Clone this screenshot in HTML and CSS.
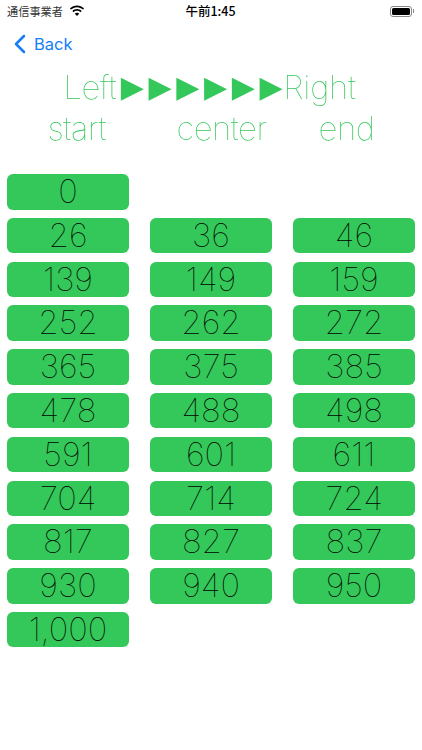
FILE: index.html
```html
<!DOCTYPE html>
<html lang="ja">
<head>
<meta charset="utf-8">
<title>Alignment</title>
<link rel="stylesheet" href="styles.css">
</head>
<body>
<div class="status">
  <div class="status-left">
    <span class="carrier">通信事業者</span>
    <svg class="wifi" viewBox="0 0 16 12" width="16" height="12"><path d="M8 2.2c2.3 0 4.4.9 6 2.4l1.1-1.2C13.200 1.600 10.700.5 8 .5S2.800 1.600.9 3.400L2 4.600c1.600-1.500 3.700-2.400 6-2.400zM8 5.800c1.300 0 2.500.5 3.400 1.400l1.200-1.200C11.400 4.800 9.800 4.100 8 4.100S4.600 4.800 3.400 6l1.200 1.200c.9-.9 2.100-1.400 3.400-1.400zM8 7.800c-.9 0-1.700.4-2.200.9L8 11l2.200-2.300c-.5-.5-1.300-.9-2.200-.9z"/></svg>
  </div>
  <span class="time">午前1:45</span>
  <div class="battery"><span class="battery-body"><span class="battery-fill"></span></span><span class="battery-cap"></span></div>
</div>
<nav class="nav">
  <svg class="chevron" viewBox="0 0 13 20" width="13" height="20"><path d="M11 2 L3 10 L11 18" fill="none" stroke="#147efb" stroke-width="2.500" stroke-linecap="round" stroke-linejoin="round"/></svg>
  <span class="back">Back</span>
</nav>
<h1 class="title"><span>Left</span><span class="arrows">▶▶▶▶▶▶</span><span class="right">Right</span></h1>
<div class="labels"><span>start</span><span>center</span><span>end</span></div>
<main class="grid">
  <div class="cell">0</div><div class="empty"></div><div class="empty"></div>
  <div class="cell">26</div><div class="cell">36</div><div class="cell">46</div>
  <div class="cell">139</div><div class="cell">149</div><div class="cell">159</div>
  <div class="cell">252</div><div class="cell">262</div><div class="cell">272</div>
  <div class="cell">365</div><div class="cell">375</div><div class="cell">385</div>
  <div class="cell">478</div><div class="cell">488</div><div class="cell">498</div>
  <div class="cell">591</div><div class="cell">601</div><div class="cell">611</div>
  <div class="cell">704</div><div class="cell">714</div><div class="cell">724</div>
  <div class="cell">817</div><div class="cell">827</div><div class="cell">837</div>
  <div class="cell">930</div><div class="cell">940</div><div class="cell">950</div>
  <div class="cell">1,000</div>
</main>
</body>
</html>
```
FILE: styles.css
```css
* { box-sizing: border-box; }
html, body { margin: 0; padding: 0; background: #fff; }
body {
  width: 422px;
  height: 750px;
  overflow: hidden;
  font-family: Inter, "Noto Sans CJK JP", sans-serif;
}
.status {
  height: 22px;
  padding: 0 8px 0 7px;
  display: flex;
  align-items: center;
  justify-content: space-between;
}
.status-left { display: flex; align-items: center; gap: 6px; width: 90px; }
.carrier { font: 400 11.200px/14px "Noto Sans CJK JP", sans-serif; color: #333; }
.wifi { display: block; }
.time { font: 500 12.500px/14px "Noto Sans CJK JP", sans-serif; color: #000; }
.battery { width: 90px; display: flex; align-items: center; justify-content: flex-end; gap: 1px; }
.battery-body { width: 22px; height: 11px; border: 1px solid #888; border-radius: 3px; padding: 1px; display: block; }
.battery-fill { display: block; height: 100%; background: #000; border-radius: 1.500px; }
.battery-cap { width: 1px; height: 4px; background: #888; }
.nav {
  height: 43px;
  padding: 0 0 0 13px;
  display: flex;
  align-items: center;
  gap: 8px;
}
.chevron { display: block; }
.back { font: 400 16.500px/20px Inter, sans-serif; color: #147efb; }
.title {
  margin: 0;
  height: 44px;
  padding-left: 63.500px;
  display: flex;
  white-space: nowrap;
  color: #34c759;
  font: 140 33px/44px Inter, sans-serif;
  letter-spacing: -0.6px;
  will-change: transform;
}
.arrows { font-family: "DejaVu Sans", sans-serif; font-weight: 400; font-size: 30px; letter-spacing: 4.700px; margin: 0 -4px 0 4.500px; }
.right { letter-spacing: -0.3px; }
.labels {
  height: 38px;
  padding: 0 0 0 47.500px;
  display: grid;
  grid-template-columns: 129px 142px auto;
  align-items: center;
  color: #34c759;
  font: 140 33px/38px Inter, sans-serif;
  letter-spacing: -0.5px;
  will-change: transform;
}
.grid {
  margin-top: 27px;
  padding: 0 7px;
  display: grid;
  grid-template-columns: repeat(3, 122px);
  grid-auto-rows: 35.500px;
  column-gap: 21px;
  row-gap: 8.300px;
}
.cell {
  background: #34c759;
  border-radius: 6px;
  text-align: center;
  color: #000;
  font: 140 33px/35.500px Inter, sans-serif;
}
```
